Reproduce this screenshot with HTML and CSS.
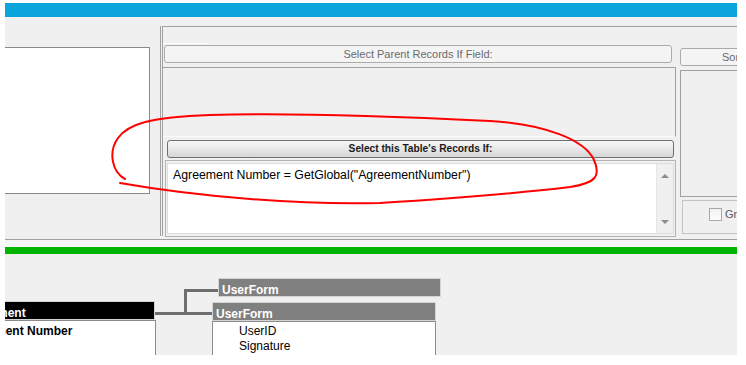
FILE: index.html
```html
<!DOCTYPE html>
<html lang="en-US">
<head>
	<title>Record Selection</title>
	<meta charset="UTF-8">
	<link rel="stylesheet" href="styles.css">
</head>
<body>
	<div class="screen">
		<div class="titlebar"></div>
		<div class="editor">
			<div class="list-col">
				<div class="list-box"></div>
			</div>
			<div class="frame">
				<div class="frame-inner">
					<div class="main-col">
						<div class="hilite"></div>
						<div class="btn btn-parent">Select Parent Records If Field:</div>
						<div class="parent-panel"></div>
						<div class="btn btn-table">Select this Table's Records If:</div>
						<div class="expr-frame">
							<div class="expr-box">
								<div class="expr-text">Agreement Number = GetGlobal("AgreementNumber")</div>
								<div class="scrollbar">
									<span class="arrow up"></span>
									<span class="arrow down"></span>
								</div>
							</div>
						</div>
					</div>
					<div class="side-col">
						<div class="btn btn-sort">Sort Records By:</div>
						<div class="sort-panel"></div>
						<div class="group-box">
							<span class="check"></span>
							<span class="group-label">Group</span>
						</div>
					</div>
				</div>
			</div>
		</div>
		<div class="divider"></div>
		<div class="greenbar"></div>
		<div class="diagram">
			<div class="tbl tbl-agreement">
				<div class="tbl-head">Agreement</div>
				<div class="tbl-body">
					<div class="key-field">Agreement Number</div>
				</div>
			</div>
			<div class="tbl tbl-user1">
				<div class="tbl-head">UserForm</div>
			</div>
			<div class="tbl tbl-user2">
				<div class="tbl-head">UserForm</div>
				<div class="tbl-body">
					<div class="field">UserID</div>
					<div class="field">Signature</div>
				</div>
			</div>
			<div class="link link-a"></div>
			<div class="link link-b"></div>
			<div class="link link-c"></div>
		</div>
	</div>
	<svg class="markup" width="746" height="365" viewBox="0 0 746 365">
		<path d="M125,179 C112,172 108,152 118,138 C128,124 150,117 210,115 C300,112 430,118 490,121 C545,124 585,140 594,160 C601,176 596,183 570,187 C520,193 460,198 380,203 C300,205 200,197 120,183" fill="none" stroke="#ff0000" stroke-width="2" stroke-linecap="round"/>
	</svg>
</body>
</html>
```

FILE: styles.css
```css
html, body {
	margin: 0;
	background: #fff;
}
body {
	position: relative;
	font-family: "Liberation Sans", Arial, sans-serif;
	font-size: 12px;
}
.screen {
	margin: 3px 0 0 5px;
	width: 732px;
	height: 352px;
	overflow: hidden;
	background: #f0f0f0;
}
.titlebar {
	height: 14px;
	background: #0ca4dc;
}
.editor {
	display: flex;
	height: 222px;
}
.list-col {
	flex: none;
	width: 155px;
	padding-top: 30px;
	box-sizing: border-box;
}
.list-box {
	margin-left: -1px;
	width: 146px;
	height: 147px;
	background: #fff;
	border: 1px solid #8a8a8e;
	box-sizing: border-box;
}
.frame {
	flex: 1;
	min-width: 0;
	margin-top: 9px;
	height: 210px;
	border-left: 1px solid #a0a0a0;
	padding-left: 1px;
}
.frame-inner {
	display: flex;
	height: 100%;
	border-left: 1px solid #a0a0a0;
	border-top: 1px solid #a0a0a0;
	box-sizing: border-box;
}
.main-col {
	width: 514px;
	flex: none;
}
.hilite {
	margin-top: 16px;
	width: 46px;
	height: 1px;
	background: #fff;
}
.btn {
	height: 18px;
	box-sizing: border-box;
	border-radius: 3px;
	font-size: 11px;
	line-height: 16px;
	text-align: center;
	white-space: nowrap;
}
.btn-parent {
	margin: 1px 0 0 1px;
	width: 508px;
	border: 1px solid #ababab;
	background: #f4f4f4;
	color: #6b6b6b;
}
.parent-panel {
	margin-top: 4px;
	width: 513px;
	height: 70px;
	box-sizing: border-box;
	border-top: 1px solid #a0a0a0;
	border-right: 1px solid #a0a0a0;
	border-bottom: 1px solid #fbfbfb;
}
.btn-table {
	margin: 3px 0 0 4px;
	width: 507px;
	border: 1px solid #707070;
	background: linear-gradient(#f7f7f7, #e8e8e8 50%, #d6d6d6);
	color: #1a1a1a;
	font-weight: bold;
	font-size: 10.2px;
}
.expr-frame {
	margin: 2px 0 0 2px;
	width: 511px;
	height: 77px;
	box-sizing: border-box;
	border: 1px solid #b4b4b4;
	padding: 2px 1px 2px 1px;
}
.expr-box {
	display: flex;
	height: 100%;
	box-sizing: border-box;
	background: #fff;
	border: 1px solid #dcdcdc;
}
.expr-text {
	flex: 1;
	padding: 4px 5px;
	font-size: 12.3px;
	line-height: 14px;
	color: #000;
	white-space: nowrap;
}
.scrollbar {
	width: 16px;
	display: flex;
	flex-direction: column;
	justify-content: space-between;
	align-items: center;
	padding: 10px 0 9px;
	background: #f0f0f0;
	border-left: 1px solid #e6e6e6;
}
.arrow {
	width: 0;
	height: 0;
	border-left: 4px solid transparent;
	border-right: 4px solid transparent;
}
.arrow.up {
	border-bottom: 4px solid #8c8c8c;
}
.arrow.down {
	border-top: 4px solid #8c8c8c;
}
.side-col {
	flex: 1;
	min-width: 0;
}
.btn-sort {
	margin: 21px 0 0 3px;
	width: 120px;
	border: 1px solid #ababab;
	background: #f4f4f4;
	color: #6b6b6b;
	text-align: left;
	padding-left: 41px;
}
.sort-panel {
	margin: 4px 0 0 3px;
	width: 100px;
	height: 127px;
	box-sizing: border-box;
	border: 1px solid #a0a0a0;
	border-right: none;
}
.group-box {
	margin: 3px 0 0 5px;
	width: 100px;
	height: 34px;
	box-sizing: border-box;
	border: 1px solid #c4c4c4;
	border-right: none;
	display: flex;
	align-items: flex-start;
	gap: 3px;
	padding: 7px 0 0 26px;
	white-space: nowrap;
}
.check {
	flex: none;
	width: 13px;
	height: 13px;
	box-sizing: border-box;
	border: 1px solid #a8a8a8;
	background: linear-gradient(#f2f2f2, #fdfdfd);
}
.group-label {
	font-size: 11px;
	line-height: 13px;
	color: #5a5a5a;
}
.divider {
	height: 8px;
	box-sizing: border-box;
	border-top: 1px solid #a0a0a0;
	background: #f6f6f6;
}
.greenbar {
	height: 7px;
	background: #00b400;
}
.diagram {
	position: relative;
	height: 101px;
}
.tbl {
	position: absolute;
}
.tbl-head {
	height: 19px;
	box-sizing: border-box;
	border: 1px solid #d4d4d4;
	background: #808080;
	color: #fff;
	font-weight: bold;
	line-height: 12px;
	padding: 5px 0 0 3px;
	white-space: nowrap;
}
.tbl-body {
	height: 40px;
	box-sizing: border-box;
	border: 1px solid #8c8c8c;
	background: #fff;
	padding: 2px 0 0 26px;
	line-height: 15px;
	color: #000;
}
.tbl-agreement {
	left: -46px;
	top: 47px;
	width: 196px;
}
.tbl-agreement .tbl-head {
	background: #000;
}
.tbl-agreement .tbl-body {
	width: 197px;
	padding: 3px 0 0 1px;
}
.key-field {
	font-weight: bold;
}
.tbl-user1 {
	left: 213px;
	top: 24px;
	width: 223px;
}
.tbl-user2 {
	left: 207px;
	top: 48px;
	width: 224px;
}
.link {
	position: absolute;
	background: #6e6e6e;
}
.link-a {
	left: 150px;
	top: 58px;
	width: 57px;
	height: 3px;
}
.link-b {
	left: 179px;
	top: 35px;
	width: 3px;
	height: 26px;
}
.link-c {
	left: 179px;
	top: 35px;
	width: 34px;
	height: 3px;
}
.markup {
	position: absolute;
	left: 0;
	top: 0;
	pointer-events: none;
}
```
